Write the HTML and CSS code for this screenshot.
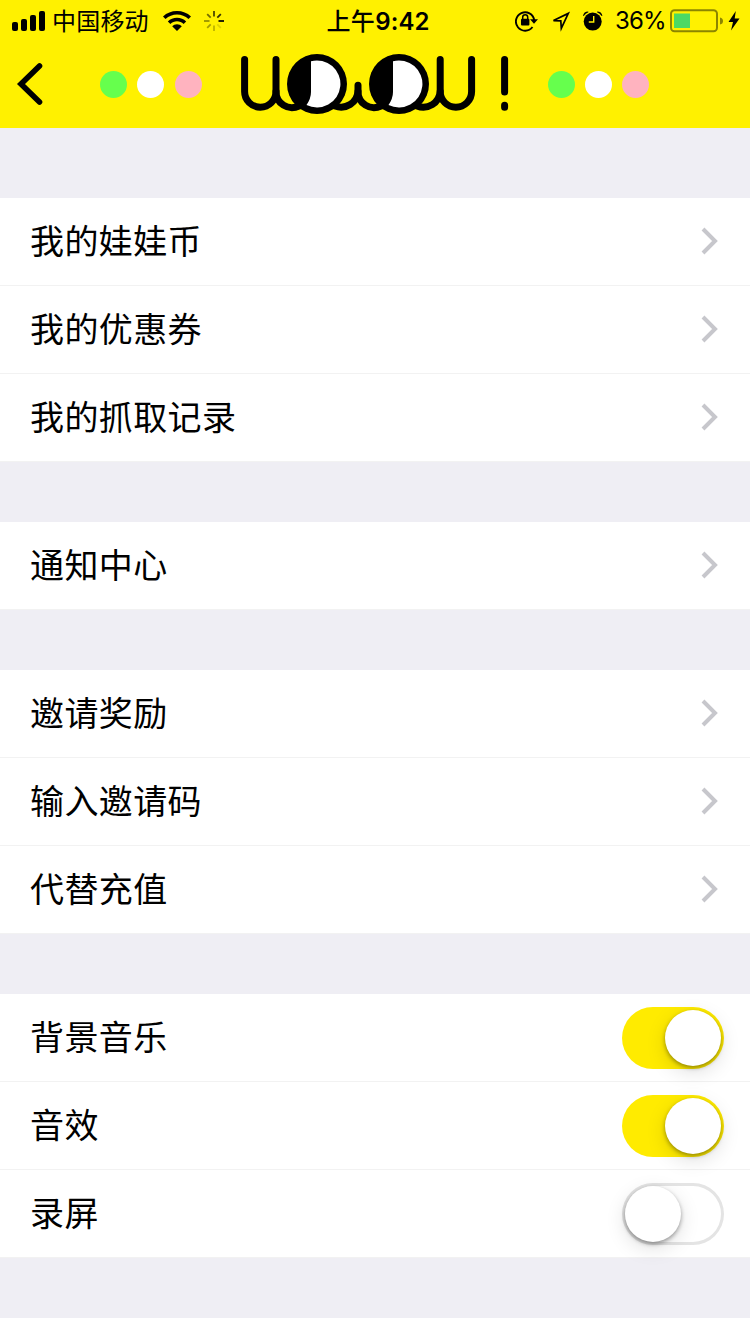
FILE: index.html
```html
<!DOCTYPE html>
<html lang="zh-CN">
<head>
<meta charset="utf-8">
<title>UOwOU!</title>
<link rel="stylesheet" href="styles.css">
</head>
<body>
<header class="header">
  <div class="status">
    <div class="status-left">
      <svg class="signal" width="34" height="20" viewBox="0 0 34 20"><rect x="0" y="11" width="6" height="9" rx="2"/><rect x="9" y="8" width="6" height="12" rx="2"/><rect x="18" y="4" width="6" height="16" rx="2"/><rect x="27" y="0" width="6" height="20" rx="2"/></svg>
      <span class="carrier">中国移动</span>
      <svg class="wifi" width="28" height="20" viewBox="0 0 28 20"><path d="M14 0C8.500 0 3.800 2 0 5.400L2.500 8C5.800 5 9.700 3.500 14 3.500S22.200 5 25.500 8L28 5.400C24.200 2 19.500 0 14 0ZM14 6.700C10.500 6.700 7.300 8 4.800 10.400L7.400 13C9.200 11.200 11.500 10.200 14 10.200S18.800 11.200 20.600 13L23.200 10.400C20.700 8 17.500 6.700 14 6.700ZM14 13.200C12.100 13.200 10.400 14 9.200 15.200L14 20L18.800 15.200C17.600 14 15.900 13.200 14 13.200Z"/></svg>
      <svg class="spinner" width="20" height="20" viewBox="-10 -10 20 20"><g stroke="#000" stroke-width="1.800"><path d="M4.500 0H10" opacity=".95"/><path d="M3.300 -3.300L6.800 -6.800" opacity=".8"/><path d="M0 -4.500V-10" opacity=".7"/><path d="M-3.300 -3.300L-6.800 -6.800" opacity=".55"/><path d="M-4.500 0H-10" opacity=".4"/><path d="M-3.300 3.300L-6.800 6.800" opacity=".35"/><path d="M0 4.500V10" opacity=".25"/><path d="M3.300 3.300L6.800 6.800" opacity=".12"/></g></svg>
    </div>
    <div class="time"><span class="ampm">上午</span>9:42</div>
    <div class="status-right">
      <svg class="lock" width="24" height="22" viewBox="0 0 24 22"><path d="M17.500 17A9.200 9.200 0 1 1 19.200 10" fill="none" stroke="#000" stroke-width="1.900"/><path d="M15 9.200H23L19 13.700Z"/><rect x="6" y="8.800" width="8.400" height="6.700" rx="1"/><path d="M7.700 9V7.300a2.500 2.500 0 0 1 5 0V9" fill="none" stroke="#000" stroke-width="1.500"/></svg>
      <svg class="arrow" width="21" height="21" viewBox="0 0 21 21"><path d="M3.500 9.600L18.300 2.400L11.300 17.300L10.800 9.900Z" fill="none" stroke="#000" stroke-width="1.700"/></svg>
      <svg class="alarm" width="20" height="20" viewBox="0 0 20 20"><circle cx="9.700" cy="10.600" r="9"/><path d="M0 4.800Q.800 .600 5.200 .500L5.400 1.300Q2.500 2.500 .700 5ZM19.400 4.800Q18.600 .600 14.200 .500L14 1.300Q16.900 2.500 18.700 5Z"/><path d="M10.700 5V11H5.800" fill="none" stroke="#fff100" stroke-width="1.400"/></svg>
      <span class="percent">36%</span>
      <svg class="battery" width="54" height="24" viewBox="0 0 54 24"><rect x="1" y="1.300" width="46" height="21" rx="3.500" fill="none" stroke="#8c8500" stroke-width="2"/><rect x="4" y="4.500" width="16" height="14.500" fill="#4cd964"/><path d="M50 8.500Q53 9 53 12T50 15.500Z" fill="#8c8500"/></svg>
      <svg class="bolt" width="12" height="20" viewBox="0 0 12 20"><path d="M7.800 0L.500 11H5L3 19.500L11.500 7.500H6.700Z"/></svg>
    </div>
  </div>
  <div class="nav">
    <svg class="back" width="28" height="44" viewBox="0 0 28 44"><path d="M23.500 4L5 22L23.500 40" fill="none" stroke="#000" stroke-width="5.600" stroke-linecap="round"/></svg>
    <div class="dots"><i class="dot green"></i><i class="dot white"></i><i class="dot pink last"></i></div>
    <svg class="logo" width="270" height="62" viewBox="240 53 270 62">
      <g fill="none" stroke="#000" stroke-width="7" stroke-linecap="round">
        <path d="M244.600 59.500V91.500A15.700 15.700 0 0 0 276 91.500V59.500"/>
        <path d="M276 91.500A16 16 0 0 0 299 106"/>
        <path d="M335 106A17 17 0 0 0 358 91.500V85.300"/>
        <path d="M358 91.500A16 16 0 0 0 381 106"/>
        <path d="M417 106A17 17 0 0 0 440.200 91.500V59.500"/>
        <path d="M440.200 91.500A15.700 15.700 0 0 0 471.600 91.500V59.500"/>
        <path d="M504.600 59.500V92M504.600 105.300V107.300"/>
      </g>
      <circle cx="317" cy="84" r="30"/>
      <path d="M311 61.200A23.500 23.500 0 1 1 306.500 105Q311 98.500 311 92Z" fill="#fff"/>
      <circle cx="399" cy="84" r="30"/>
      <path d="M393 61.200A23.500 23.500 0 1 1 388.500 105Q393 98.500 393 92Z" fill="#fff"/>
    </svg>
    <div class="dots dots-right"><i class="dot green"></i><i class="dot white"></i><i class="dot pink"></i></div>
  </div>
</header>
<main class="settings">
  <section class="group">
    <div class="row"><span class="label">我的娃娃币</span><svg class="chevron" viewBox="0 0 18 28"><path d="M2 2L14 14L2 26"/></svg></div>
    <div class="row"><span class="label">我的优惠券</span><svg class="chevron" viewBox="0 0 18 28"><path d="M2 2L14 14L2 26"/></svg></div>
    <div class="row"><span class="label">我的抓取记录</span><svg class="chevron" viewBox="0 0 18 28"><path d="M2 2L14 14L2 26"/></svg></div>
  </section>
  <section class="group">
    <div class="row"><span class="label">通知中心</span><svg class="chevron" viewBox="0 0 18 28"><path d="M2 2L14 14L2 26"/></svg></div>
  </section>
  <section class="group">
    <div class="row"><span class="label">邀请奖励</span><svg class="chevron" viewBox="0 0 18 28"><path d="M2 2L14 14L2 26"/></svg></div>
    <div class="row"><span class="label">输入邀请码</span><svg class="chevron" viewBox="0 0 18 28"><path d="M2 2L14 14L2 26"/></svg></div>
    <div class="row"><span class="label">代替充值</span><svg class="chevron" viewBox="0 0 18 28"><path d="M2 2L14 14L2 26"/></svg></div>
  </section>
  <section class="group">
    <div class="row switch-row"><span class="label">背景音乐</span><div class="switch on"><div class="knob"></div></div></div>
    <div class="row switch-row"><span class="label">音效</span><div class="switch on"><div class="knob"></div></div></div>
    <div class="row switch-row"><span class="label">录屏</span><div class="switch"><div class="knob"></div></div></div>
  </section>
</main>
</body>
</html>
```
FILE: styles.css
```css
* { box-sizing: border-box; }
body {
  margin: 0;
  width: 750px;
  height: 1334px;
  overflow: hidden;
  background: #fff;
  color: #000;
  font-family: Inter, "Noto Sans CJK SC", sans-serif;
}
svg { display: block; flex: none; }
.header { height: 128px; background: #fff100; }
.status {
  height: 40px;
  display: grid;
  grid-template-columns: 310px 136px 304px;
  align-items: center;
  white-space: nowrap;
}
.status-left, .status-right { display: flex; align-items: center; height: 40px; }
.status-left { padding-left: 12px; }
.carrier {
  width: 99px;
  margin-left: 6px;
  padding-bottom: 3px;
  font: 24px/37px "Noto Sans CJK SC", sans-serif;
  letter-spacing: .2px;
}
.wifi { margin-left: 12px; }
.spinner { margin-left: 13px; }
.time {
  text-align: center;
  font-size: 24px;
  font-weight: 600;
  line-height: 40px;
  height: 42px;
  letter-spacing: .1px;
}
.ampm { font-family: "Noto Sans CJK SC", sans-serif; font-weight: 500; letter-spacing: .4px; }
.status-right { padding-left: 69px; }
.arrow { margin-left: 11px; }
.alarm { margin-left: 12px; }
.percent { width: 50px; margin-left: 12px; font-size: 24px; line-height: 40px; letter-spacing: -.9px; }
.battery { margin-left: 5px; }
.bolt { margin-left: 4px; }
.nav { height: 88px; display: flex; align-items: center; padding-left: 16px; }
.dots { display: flex; gap: 10px; margin-left: 56px; }
.dot { width: 27px; height: 27px; border-radius: 50%; }
.last { margin-left: 1px; }
.green { background: #66ff4d; }
.white { background: #fff; }
.pink { background: #ffb3bf; }
.logo { margin-left: 38px; }
.dots-right { margin-left: 38px; }
.settings {
  height: 1190px;
  padding: 70px 0 60px;
  display: flex;
  flex-direction: column;
  gap: 60px;
  background: #efeef4;
}
.group { background: #fff; }
.row {
  height: 88px;
  display: flex;
  align-items: center;
  justify-content: space-between;
  padding: 0 31px 0 30px;
  border-bottom: 1px solid #f2f2f2;
}
.label {
  padding-bottom: 4px;
  font: 34px/82px "Noto Sans CJK SC", sans-serif;
  letter-spacing: .4px;
}
.chevron { width: 18px; height: 28px; margin-bottom: 2px; fill: none; stroke: #c7c7cc; stroke-width: 4; }
.switch-row { padding-right: 26px; }
.switch {
  width: 102px;
  height: 62px;
  padding: 3px;
  display: flex;
  border-radius: 31px;
  box-shadow: inset 0 0 0 3px #e4e4e4;
}
.on { justify-content: flex-end; background: #ffeb00; box-shadow: none; }
.knob {
  width: 56px;
  height: 56px;
  border-radius: 50%;
  background: #fff;
  box-shadow: 0 2px 4px rgba(0,0,0,.36), 0 6px 20px rgba(0,0,0,.13);
}
```
